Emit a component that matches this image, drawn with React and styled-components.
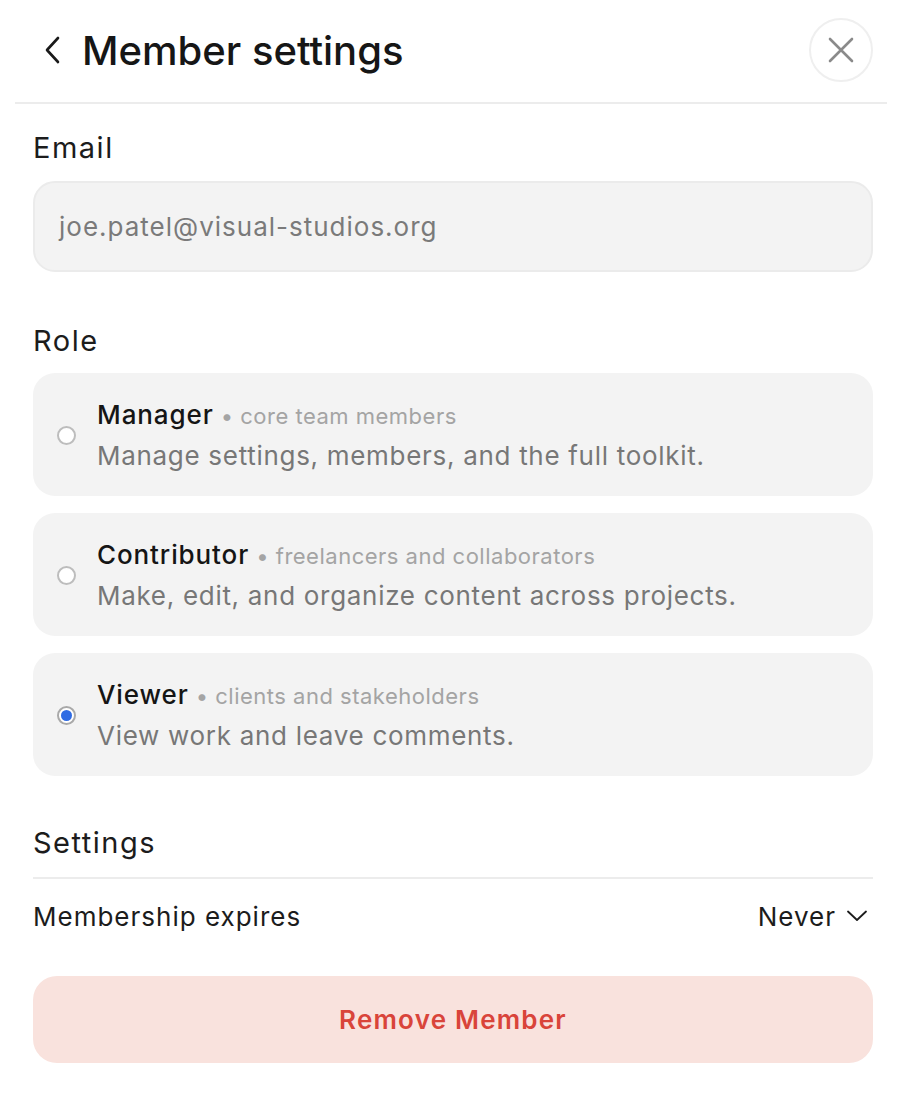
import React from "react";
import styled, { createGlobalStyle } from "styled-components";

const Global = createGlobalStyle`
  html, body { margin: 0; padding: 0; background: #fff; }
  body { font-family: Inter, "Noto Sans", sans-serif; color: #1a1a1a; -webkit-font-smoothing: antialiased; }
  * { box-sizing: border-box; }
`;

const Page = styled.div`
  width: 902px;
  padding: 0 15px;
`;

const Header = styled.header`
  display: flex;
  align-items: center;
  justify-content: space-between;
  height: 104px;
  padding: 0 14px 2px 28px;
  border-bottom: 2px solid #ececec;
`;

const TitleWrap = styled.div`
  display: flex;
  align-items: center;
  gap: 19px;
`;

const BackButton = styled.button`
  border: none;
  background: none;
  padding: 0;
  display: flex;
  align-items: center;
  color: #1a1a1a;
`;

const Title = styled.h1`
  margin: 0;
  font-size: 40px;
  font-weight: 500;
  letter-spacing: 0px;
  color: #161616;
`;

const CloseButton = styled.button`
  width: 64px;
  height: 64px;
  border-radius: 50%;
  border: 2px solid #efefef;
  background: #fff;
  display: flex;
  align-items: center;
  justify-content: center;
  padding: 0;
  color: #8a8a8a;
`;

const Body = styled.div`
  padding: 0 14px 0 18px;
`;

const SectionLabel = styled.div`
  font-size: 29px;
  font-weight: 400;
  letter-spacing: 1.5px;
  color: #1c1c1c;
  margin-top: ${(p) => p.$top}px;
  margin-bottom: ${(p) => p.$bottom}px;
  line-height: 36px;
`;

const Input = styled.div`
  height: 91px;
  border-radius: 22px;
  background: #f3f3f3;
  border: 2px solid #ebebeb;
  display: flex;
  align-items: center;
  padding: 0 24px;
  font-size: 26px;
  letter-spacing: 1px;
  color: #7a7a7a;
`;

const RoleList = styled.div`
  display: flex;
  flex-direction: column;
  gap: 17px;
`;

const RoleCard = styled.label`
  height: 123px;
  border-radius: 22px;
  background: #f3f3f3;
  display: flex;
  align-items: center;
  padding: 0 0 0 24px;
  gap: 21px;
`;

const Radio = styled.span`
  width: 19px;
  height: 19px;
  border-radius: 50%;
  border: 2px solid ${(p) => (p.$checked ? "#a9a9a9" : "#bdbdbd")};
  background: #fff;
  display: flex;
  align-items: center;
  justify-content: center;
  flex-shrink: 0;
  margin-top: 1px;
  &::after {
    content: "";
    width: 11px;
    height: 11px;
    border-radius: 50%;
    background: ${(p) => (p.$checked ? "#2f6be3" : "transparent")};
  }
`;

const RoleText = styled.div`
  display: flex;
  flex-direction: column;
  gap: 10px;
`;

const RoleTitleRow = styled.div`
  display: flex;
  align-items: baseline;
  gap: 7px;
`;

const RoleName = styled.span`
  font-size: 26px;
  font-weight: 500;
  letter-spacing: 0.9px;
  color: #151515;
`;

const RoleHint = styled.span`
  font-size: 22px;
  letter-spacing: 0.5px;
  color: #a4a4a4;
`;

const RoleDesc = styled.div`
  font-size: 26px;
  letter-spacing: 0.7px;
  color: #777;
`;

const Divider = styled.div`
  height: 2px;
  background: #ececec;
`;

const SettingRow = styled.div`
  display: flex;
  align-items: center;
  justify-content: space-between;
  height: 74px;
  font-size: 26px;
  letter-spacing: 1px;
  color: #1c1c1c;
`;

const SelectValue = styled.div`
  display: flex;
  align-items: center;
  gap: 11px;
  padding-right: 6px;
`;

const RemoveButton = styled.button`
  width: 100%;
  height: 87px;
  margin-top: 23px;
  border: none;
  border-radius: 24px;
  background: #f9e2dd;
  color: #d9443a;
  font-family: Inter, "Noto Sans", sans-serif;
  font-size: 26px;
  font-weight: 600;
  letter-spacing: 1.2px;
`;

const roles = [
  { name: "Manager", hint: "core team members", desc: "Manage settings, members, and the full toolkit." },
  { name: "Contributor", hint: "freelancers and collaborators", desc: "Make, edit, and organize content across projects." },
  { name: "Viewer", hint: "clients and stakeholders", desc: "View work and leave comments.", checked: true },
];

export default function App() {
  return (
    <>
      <Global />
      <Page>
        <Header>
          <TitleWrap>
            <BackButton aria-label="Back">
              <svg width="20" height="30" viewBox="0 0 20 30" fill="none" stroke="currentColor" strokeWidth="2.6" strokeLinecap="round" strokeLinejoin="round">
                <path d="M15 3 L4 15 L15 27" />
              </svg>
            </BackButton>
            <Title>Member settings</Title>
          </TitleWrap>
          <CloseButton aria-label="Close">
            <svg width="28" height="28" viewBox="0 0 28 28" fill="none" stroke="currentColor" strokeWidth="2.6" strokeLinecap="round">
              <path d="M3 3 L25 25 M25 3 L3 25" />
            </svg>
          </CloseButton>
        </Header>
        <Body>
          <SectionLabel $top={26} $bottom={15}>Email</SectionLabel>
          <Input>joe.patel@visual-studios.org</Input>
          <SectionLabel $top={51} $bottom={14}>Role</SectionLabel>
          <RoleList>
            {roles.map((r) => (
              <RoleCard key={r.name}>
                <Radio $checked={r.checked} />
                <RoleText>
                  <RoleTitleRow>
                    <RoleName>{r.name}</RoleName>
                    <RoleHint>• {r.hint}</RoleHint>
                  </RoleTitleRow>
                  <RoleDesc>{r.desc}</RoleDesc>
                </RoleText>
              </RoleCard>
            ))}
          </RoleList>
          <SectionLabel $top={49} $bottom={16}>Settings</SectionLabel>
          <Divider />
          <SettingRow>
            <span>Membership expires</span>
            <SelectValue>
              <span>Never</span>
              <svg width="20" height="12" viewBox="0 0 20 12" fill="none" stroke="currentColor" strokeWidth="1.8" strokeLinecap="round" strokeLinejoin="round">
                <path d="M1 1.5 L10 10 L19 1.5" />
              </svg>
            </SelectValue>
          </SettingRow>
          <RemoveButton>Remove Member</RemoveButton>
        </Body>
      </Page>
    </>
  );
}
